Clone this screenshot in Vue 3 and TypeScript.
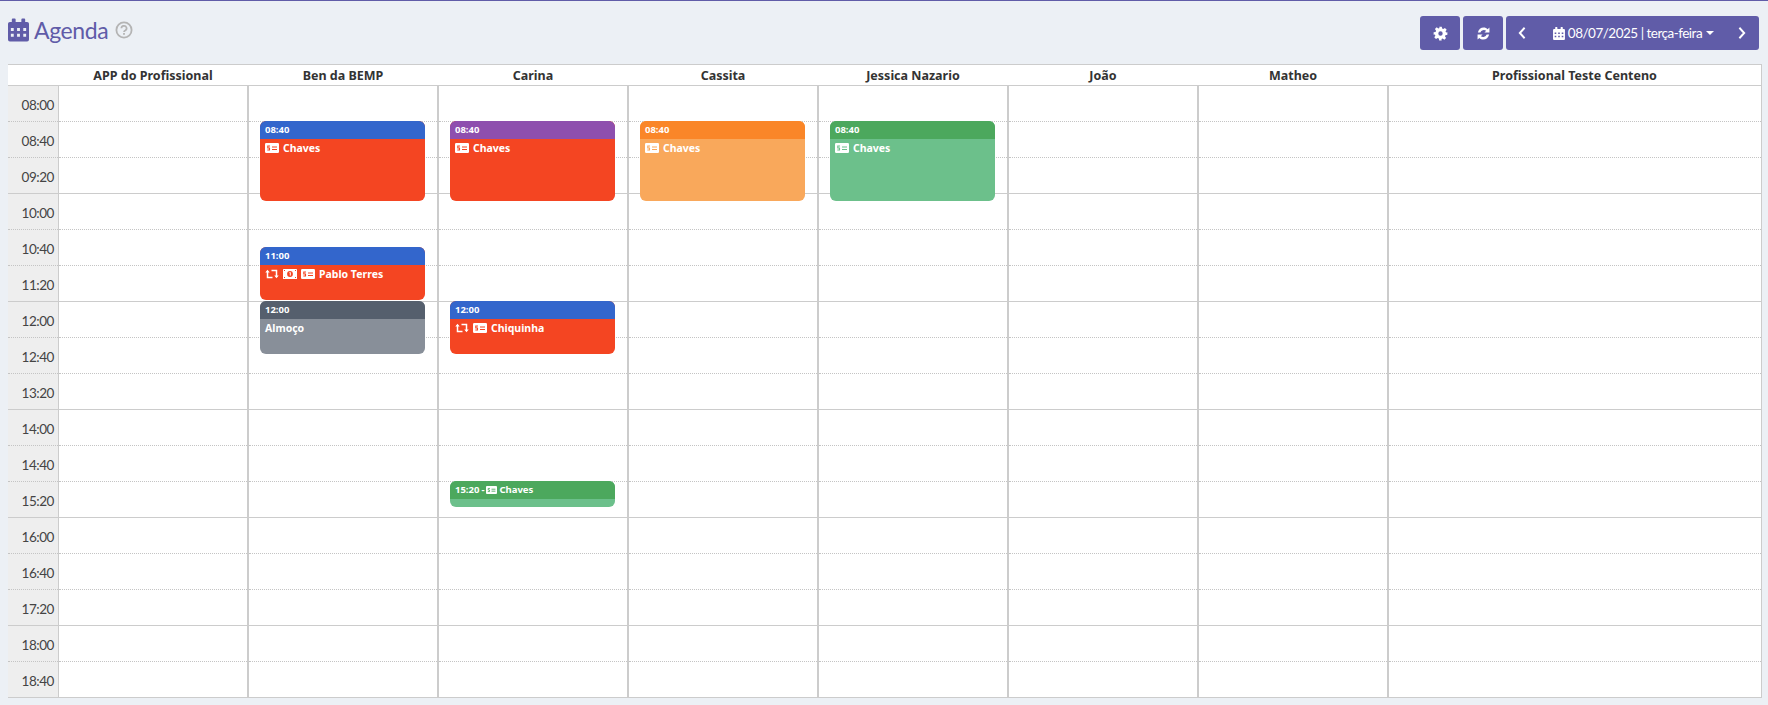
<script setup lang="ts">
interface Ev {
  top: number
  height: number
  time: string
  head: string
  body: string
  icons: string[]
  name: string
  inline?: boolean
}
const times = ['08:00','08:40','09:20','10:00','10:40','11:20','12:00','12:40','13:20','14:00','14:40','15:20','16:00','16:40','17:20','18:00','18:40']
const c = { blue: '#3366cc', red: '#f44522', purple: '#8e4fae', orange: '#fa8628', lorange: '#f9a85b', green: '#4ca85d', lgreen: '#6cc08b', dgray: '#555f6d', gray: '#888f99' }
const columns: { name: string; wide?: boolean; events: Ev[] }[] = [
  { name: 'APP do Profissional', events: [] },
  { name: 'Ben da BEMP', events: [
    { top: 35, height: 80, time: '08:40', head: c.blue, body: c.red, icons: ['check'], name: 'Chaves' },
    { top: 161, height: 53, time: '11:00', head: c.blue, body: c.red, icons: ['retweet', 'money', 'check'], name: 'Pablo Terres' },
    { top: 215, height: 53, time: '12:00', head: c.dgray, body: c.gray, icons: [], name: 'Almoço' },
  ] },
  { name: 'Carina', events: [
    { top: 35, height: 80, time: '08:40', head: c.purple, body: c.red, icons: ['check'], name: 'Chaves' },
    { top: 215, height: 53, time: '12:00', head: c.blue, body: c.red, icons: ['retweet', 'check'], name: 'Chiquinha' },
    { top: 395, height: 26, time: '15:20', head: c.green, body: c.lgreen, icons: ['check'], name: 'Chaves', inline: true },
  ] },
  { name: 'Cassita', events: [
    { top: 35, height: 80, time: '08:40', head: c.orange, body: c.lorange, icons: ['check'], name: 'Chaves' },
  ] },
  { name: 'Jessica Nazario', events: [
    { top: 35, height: 80, time: '08:40', head: c.green, body: c.lgreen, icons: ['check'], name: 'Chaves' },
  ] },
  { name: 'João', events: [] },
  { name: 'Matheo', events: [] },
  { name: 'Profissional Teste Centeno', wide: true, events: [] },
]
</script>

<template>
  <div class="page">
    <header class="top">
      <h1 class="title">
        <svg class="cal" viewBox="0 0 22 24" width="21" height="24">
          <path fill="currentColor" fill-rule="evenodd" d="M5 0h2a1 1 0 0 1 1 1v2.500h6V1a1 1 0 0 1 1-1h2a1 1 0 0 1 1 1v2.500h2a2 2 0 0 1 2 2V22a2 2 0 0 1-2 2H2a2 2 0 0 1-2-2V5.500a2 2 0 0 1 2-2h2V1a1 1 0 0 1 1-1ZM3 10v3h3v-3H3Zm6.500 0v3h3v-3h-3ZM16 10v3h3v-3h-3ZM3 16v3h3v-3H3Zm6.500 0v3h3v-3h-3ZM16 16v3h3v-3h-3Z" />
        </svg>
        <span>Agenda</span>
        <svg class="help" viewBox="0 0 18 18" width="18" height="18">
          <circle cx="9" cy="9" r="7.600" fill="none" stroke="currentColor" stroke-width="1.800" />
          <path d="M6.400 7.300a2.600 2.400 0 1 1 3.800 2.100c-.9.500-1.200.8-1.200 1.600" fill="none" stroke="currentColor" stroke-width="1.700" />
          <rect x="8.100" y="12" width="1.800" height="1.800" fill="currentColor" />
        </svg>
      </h1>
      <div class="actions">
        <button class="btn square" type="button" aria-label="Configurações">
          <svg viewBox="0 0 24 24" width="15" height="15"><path fill="#fff" fill-rule="evenodd" d="M10 1h4l.6 3.100 1.900.8 2.600-1.800 2.800 2.800-1.800 2.600.8 1.900L23 10v4l-3.100.6-.8 1.900 1.800 2.600-2.800 2.800-2.600-1.800-1.900.8L13.900 23h-4l-.6-3.100-1.900-.8-2.600 1.800-2.800-2.800 1.800-2.600-.8-1.900L1 14v-4l3.100-.6.8-1.900-1.800-2.600 2.800-2.800 2.600 1.800 1.900-.8L10 1Zm2 7.500a3.500 3.500 0 1 0 0 7 3.500 3.500 0 0 0 0-7Z" /></svg>
        </button>
        <button class="btn square" type="button" aria-label="Atualizar">
          <svg viewBox="0 0 24 24" width="15" height="15"><path fill="#fff" d="M3 10.500C4 5.500 7.800 2.500 12.300 2.500c2.500 0 4.700 1 6.300 2.500L21.500 2.500V10.500h-8l2.800-2.800a6 6 0 0 0-9.300 2.800H3ZM21 13.500c-1 5-4.800 8-9.300 8-2.500 0-4.700-1-6.300-2.500l-2.900 2.500v-8h8l-2.800 2.800a6 6 0 0 0 9.300-2.800h4Z" /></svg>
        </button>
        <div class="btn datebar">
          <svg class="chev" viewBox="0 0 10 16" width="10" height="14"><path d="M8 2 2.500 8 8 14" fill="none" stroke="#fff" stroke-width="2.200" /></svg>
          <span class="date">
            <svg viewBox="0 0 22 24" width="12" height="13"><path fill="#fff" fill-rule="evenodd" d="M5 0h2a1 1 0 0 1 1 1v2.500h6V1a1 1 0 0 1 1-1h2a1 1 0 0 1 1 1v2.500h2a2 2 0 0 1 2 2V22a2 2 0 0 1-2 2H2a2 2 0 0 1-2-2V5.500a2 2 0 0 1 2-2h2V1a1 1 0 0 1 1-1ZM3 10v3h3v-3H3Zm6.500 0v3h3v-3h-3ZM16 10v3h3v-3h-3ZM3 16v3h3v-3H3Zm6.500 0v3h3v-3h-3ZM16 16v3h3v-3h-3Z" /></svg>
            <span>08/07/2025 | terça-feira</span>
            <i class="caret"></i>
          </span>
          <svg class="chev" viewBox="0 0 10 16" width="10" height="14"><path d="M2 2l5.500 6L2 14" fill="none" stroke="#fff" stroke-width="2.200" /></svg>
        </div>
      </div>
    </header>

    <section class="board">
      <div class="head">
        <div class="corner"></div>
        <div v-for="col in columns" :key="col.name" class="head-cell" :class="{ wide: col.wide }">{{ col.name }}</div>
      </div>
      <div class="body">
        <div class="times">
          <div v-for="(t, i) in times" :key="t" class="cell time" :class="{ hour: i % 3 === 2 }">{{ t }}</div>
        </div>
        <div v-for="col in columns" :key="col.name" class="col" :class="{ wide: col.wide }">
          <div v-for="(t, i) in times" :key="t" class="cell" :class="{ hour: i % 3 === 2 }"></div>
          <article
            v-for="ev in col.events"
            :key="ev.time"
            class="event"
            :style="{ top: ev.top + 'px', height: ev.height + 'px', background: ev.body }"
          >
            <div class="ev-head" :style="{ background: ev.head }">
              <span>{{ ev.time }}</span>
              <template v-if="ev.inline">
                <span>-</span>
                <svg viewBox="0 0 14 10" width="11" height="8">
                  <rect width="14" height="10" rx="1.200" fill="#fff" />
                  <path d="M5 3H2.800v2h1.700v2H2.300M7 4h5M7 6.500h5" fill="none" :stroke="ev.head" stroke-width="1.100" />
                </svg>
                <span>{{ ev.name }}</span>
              </template>
            </div>
            <div v-if="!ev.inline" class="ev-body">
              <template v-for="ic in ev.icons" :key="ic">
                <svg v-if="ic === 'check'" viewBox="0 0 14 10" width="14" height="10">
                  <rect width="14" height="10" rx="1.200" fill="#fff" />
                  <path d="M5 3H2.800v2h1.700v2H2.300M7 4h5M7 6.500h5" fill="none" :stroke="ev.body" stroke-width="1.100" />
                </svg>
                <svg v-else-if="ic === 'money'" viewBox="0 0 14 10" width="14" height="10">
                  <rect width="14" height="10" rx=".6" fill="#fff" />
                  <circle cx="7" cy="5" r="2.900" :fill="ev.body" />
                  <path d="M6.500 3.600 7.300 3.400V6.600" fill="none" stroke="#fff" stroke-width="1" />
                  <path d="M1 1h1v1H1ZM12 1h1v1h-1ZM1 8h1v1H1ZM12 8h1v1h-1Z" :fill="ev.body" />
                </svg>
                <svg v-else viewBox="0 0 14 10" width="14" height="10">
                  <path d="M2.500 2v6.500H7.500M6.500 1.500h5V8" fill="none" stroke="#fff" stroke-width="1.500" />
                  <path d="M.3 3.500 2.500 .8 4.700 3.500ZM9.300 6.500 11.500 9.200 13.700 6.500Z" fill="#fff" />
                </svg>
              </template>
              <span>{{ ev.name }}</span>
            </div>
          </article>
        </div>
      </div>
    </section>
  </div>
</template>

<style>
html, body { margin: 0; background: #ecf0f5; }
</style>

<style scoped>
.page {
  height: 705px;
  box-sizing: border-box;
  border-top: 1px solid #605ca8;
  padding: 0 7px 0 8px;
  background: #ecf0f5;
  font-family: "Noto Sans", "Open Sans", sans-serif;
  overflow: hidden;
}
.top {
  height: 63px;
  display: flex;
  justify-content: space-between;
  align-items: flex-start;
}
.title {
  margin: 15px 0 0;
  display: flex;
  align-items: center;
  gap: 5px;
  color: #605ca8;
  font-family: "Lato", sans-serif;
  font-size: 23px;
  font-weight: 400;
  letter-spacing: -.4px;
  line-height: 28px;
}
.help { color: #b4b4b4; margin-left: 2px; }
.actions { display: flex; gap: 3px; margin-top: 15px; margin-right: 2px; }
.btn {
  height: 34px;
  border: 0;
  border-radius: 3px;
  background: #605ca8;
  display: flex;
  align-items: center;
  justify-content: center;
  padding: 0;
  box-sizing: border-box;
}
.square { width: 40px; }
.datebar {
  width: 253px;
  justify-content: space-between;
  padding: 0 12px 0 11px;
  color: #fff;
  font-family: "Lato", sans-serif;
  font-size: 13.500px;
  letter-spacing: -.5px;
}
.date { display: flex; align-items: center; gap: 3px; margin-left: 3px; }
.caret {
  width: 0; height: 0;
  margin-left: 1px;
  border-left: 4px solid transparent;
  border-right: 4px solid transparent;
  border-top: 4px solid #fff;
}
.board { background: #fff; border-right: 1px solid #ccc; width: 1753px; }
.head { display: flex; height: 20px; border-top: 1px solid #ccc; border-bottom: 1px solid #ccc; }
.corner { width: 50px; flex: none; }
.head-cell {
  width: 190px;
  flex: none;
  text-align: center;
  font-size: 12.500px;
  font-weight: 700;
  line-height: 21px;
  color: #333;
}
.head-cell.wide { width: auto; flex: 1; }
.body { display: flex; }
.times { width: 50px; flex: none; background: #eee; border-right: 1px solid #ccc; }
.col { width: 188px; flex: none; position: relative; border-right: 2px solid #ccc; }
.col.wide { flex: 1; border-right: 0; }
.cell { height: 36px; box-sizing: border-box; border-bottom: 1px dotted #c4c4c4; }
.cell.hour { border-bottom: 1px solid #ccc; }
.cell:last-of-type { border-bottom: 1px solid #ccc; }
.time {
  text-align: right;
  padding-right: 4px;
  font-family: "Lato", sans-serif;
  font-size: 13.500px;
  letter-spacing: -.45px;
  line-height: 38px;
  color: #444;
}
.event {
  position: absolute;
  left: 11px;
  width: 165px;
  border-radius: 6px;
  overflow: hidden;
  color: #fff;
  font-weight: 700;
}
.ev-head {
  height: 18px;
  padding: 0 5px;
  font-size: 9.500px;
  line-height: 18px;
  display: flex;
  align-items: center;
  gap: 2px;
}
.ev-body {
  padding: 2px 5px;
  display: flex;
  align-items: center;
  gap: 4px;
  font-size: 10.500px;
  line-height: 14px;
}
</style>
